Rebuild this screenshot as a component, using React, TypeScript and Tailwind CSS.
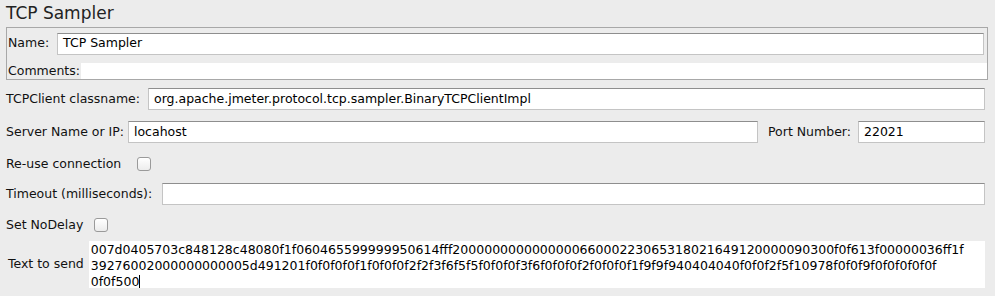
import React from 'react'

const font = "font-['DejaVu_Sans',sans-serif]"

const lines = [
  '007d0405703c848128c48080f1f060465599999950614fff200000000000000066000223065318021649120000090300f0f613f00000036ff1f',
  '39276002000000000005d491201f0f0f0f0f1f0f0f0f2f2f3f6f5f5f0f0f0f3f6f0f0f0f2f0f0f0f1f9f9f940404040f0f0f2f5f10978f0f0f9f0f0f0f0f0f',
  '0f0f500',
]

function Field({ value, className }: { value?: string; className?: string }) {
  return (
    <div
      className={[
        'h-[22px] bg-white border border-[#c4c4c4] border-t-[#8e8e8e] flex items-center px-[5px] text-[12.5px] text-black',
        className ?? '',
      ].join(' ')}
    >
      {value}
    </div>
  )
}

function Checkbox() {
  return (
    <div className="w-[14px] h-[14px] rounded-[3px] border border-[#9a9a9a] bg-gradient-to-b from-white to-[#ececec] shadow-[inset_0_1px_0_#fff]" />
  )
}

export default function App() {
  return (
    <div className={`w-[995px] h-[296px] bg-[#ececec] text-[12.5px] text-[#111] overflow-hidden ${font}`}>
      {/* Header */}
      <div className="h-[27px] pl-[6px] pt-[1px] text-[17px] leading-[24px] text-[#222]">TCP Sampler</div>

      {/* Name / comments panel */}
      <div className="ml-[6px] w-[982px] h-[53px] border border-[#a8a8a8] flex flex-col">
        <div className="flex items-center h-[31px] pl-[1px] pr-[3px] gap-[6px]">
          <span className="w-[43px]">Name:</span>
          <Field value="TCP Sampler" className="flex-1" />
        </div>
        <div className="flex items-center h-[16px] mt-[4px] pl-[1px]">
          <span className="w-[73px]">Comments:</span>
          <div className="flex-1 h-full bg-white" />
        </div>
      </div>

      <div className="flex flex-col pl-[6px] pr-[10px]">
        {/* Classname */}
        <div className="flex items-center gap-[6px] mt-[8px]">
          <span className="w-[136px]">TCPClient classname:</span>
          <Field value="org.apache.jmeter.protocol.tcp.sampler.BinaryTCPClientImpl" className="flex-1" />
        </div>

        {/* Server / port */}
        <div className="flex items-center mt-[11px]">
          <span className="w-[122px]">Server Name or IP:</span>
          <Field value="locahost" className="w-[630px]" />
          <span className="ml-[10px] w-[90px]">Port Number:</span>
          <Field value="22021" className="flex-1" />
        </div>

        {/* Re-use connection */}
        <div className="flex items-center h-[18px] mt-[12px]">
          <span className="w-[131px]">Re-use connection</span>
          <Checkbox />
        </div>

        {/* Timeout */}
        <div className="flex items-center mt-[10px]">
          <span className="w-[156px]">Timeout (milliseconds):</span>
          <Field className="flex-1" />
        </div>

        {/* NoDelay */}
        <div className="flex items-center h-[18px] mt-[11px]">
          <span className="w-[88px]">Set NoDelay</span>
          <Checkbox />
        </div>

        {/* Text to send */}
        <div className="flex items-center mt-[7px]">
          <span className="w-[83px] text-right pr-[5px]">Text to send</span>
          <div className="w-[899px] h-[47px] bg-white pl-[2px] pt-[1px] leading-[16px] text-[12.5px] text-black overflow-hidden">
            {lines.map((l, i) => (
              <div key={i} className="whitespace-pre">
                {l}
                {i === lines.length - 1 && <span className="inline-block w-px h-[14px] bg-black align-middle -mt-[2px]" />}
              </div>
            ))}
          </div>
        </div>
      </div>
    </div>
  )
}
